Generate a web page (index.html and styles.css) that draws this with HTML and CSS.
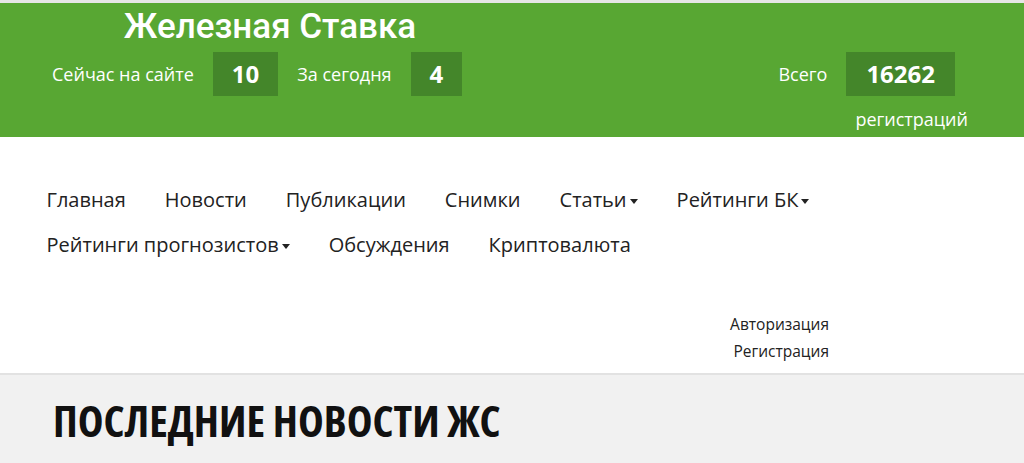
FILE: index.html
```html
<!DOCTYPE html>
<html lang="ru">
<head>
<meta charset="utf-8">
<title>Железная Ставка</title>
<link rel="stylesheet" href="styles.css">
</head>
<body>
<header class="top">
  <div class="top-left">
    <div class="brand">Железная Ставка</div>
    <div class="stats">
      <span class="stat-label">Сейчас на сайте</span>
      <span class="stat-box">10</span>
      <span class="stat-label">За сегодня</span>
      <span class="stat-box">4</span>
    </div>
  </div>
  <div class="top-right">
    <div class="stats">
      <span class="stat-label">Всего</span>
      <span class="stat-box">16262</span>
    </div>
    <div class="stat-note">регистраций</div>
  </div>
</header>

<nav class="menu">
  <ul class="menu-list">
    <li><a href="#">Главная</a></li>
    <li><a href="#">Новости</a></li>
    <li><a href="#">Публикации</a></li>
    <li><a href="#">Снимки</a></li>
    <li><a href="#" class="drop">Статьи</a></li>
    <li><a href="#" class="drop">Рейтинги БК</a></li>
    <li><a href="#" class="drop">Рейтинги прогнозистов</a></li>
    <li><a href="#">Обсуждения</a></li>
    <li><a href="#">Криптовалюта</a></li>
  </ul>
</nav>

<div class="account">
  <div class="account-links">
    <a href="#">Авторизация</a>
    <a href="#">Регистрация</a>
  </div>
</div>

<main class="content">
  <h1 class="section-title">ПОСЛЕДНИЕ НОВОСТИ ЖС</h1>
</main>
</body>
</html>
```

FILE: styles.css
```css
html, body {
  margin: 0;
  padding: 0;
}

body {
  background: #f1f1f1;
  border-top: 3px solid #e6e6e6;
  font-family: "Open Sans", "Noto Sans", sans-serif;
  color: #222;
}

a {
  color: inherit;
  text-decoration: none;
}

/* green header with site stats */
.top {
  background: #58a733;
  height: 134px;
  display: flex;
  justify-content: space-between;
  color: #fff;
}

.top-left {
  width: 540px;
  display: flex;
  flex-direction: column;
}

.brand {
  font-family: Roboto, "Noto Sans", sans-serif;
  font-weight: 500;
  font-size: 35px;
  line-height: 42px;
  text-align: center;
  margin-top: 3px;
}

.stats {
  display: flex;
  align-items: center;
  gap: 19px;
}

.top-left .stats {
  padding-left: 52px;
  margin-top: 4px;
}

.stat-label {
  font-size: 18px;
}

.stat-box {
  background: #44862a;
  height: 44px;
  line-height: 44px;
  padding: 0 19px;
  font-size: 24px;
  font-weight: 700;
}

.top-right {
  display: flex;
  flex-direction: column;
  align-items: flex-end;
  padding-right: 56px;
  padding-top: 49px;
}

.top-right .stats {
  margin-right: 13px;
}

.top-right .stat-box {
  padding: 0 20px;
}

.stat-note {
  font-size: 18px;
  line-height: 24px;
  margin-top: 11px;
}

/* main navigation */
.menu {
  background: #fff;
  padding: 45px 0 0 27px;
}

.menu-list {
  list-style: none;
  margin: 0;
  padding: 0;
  width: 840px;
  display: flex;
  flex-wrap: wrap;
}

.menu-list li {
  padding: 0 19.5px;
  height: 45px;
  line-height: 36px;
  font-size: 20px;
}

.drop::after {
  content: "";
  display: inline-block;
  margin-left: 3px;
  vertical-align: middle;
  border-top: 5px solid #222;
  border-left: 4px solid transparent;
  border-right: 4px solid transparent;
}

/* login / signup links */
.account {
  background: #fff;
  padding: 39px 0 8px;
  border-bottom: 2px solid #e2e2e2;
}

.account-links {
  width: 829px;
  display: flex;
  flex-direction: column;
  align-items: flex-end;
  font-size: 15.5px;
  line-height: 27px;
}

/* news area */
.content {
  padding: 20px 53px;
}

.section-title {
  margin: 0;
  font-family: "Open Sans", "DejaVu Sans Condensed", sans-serif;
  font-stretch: 75%;
  font-weight: 700;
  font-size: 43.5px;
  line-height: 52px;
  color: #111;
}
```
